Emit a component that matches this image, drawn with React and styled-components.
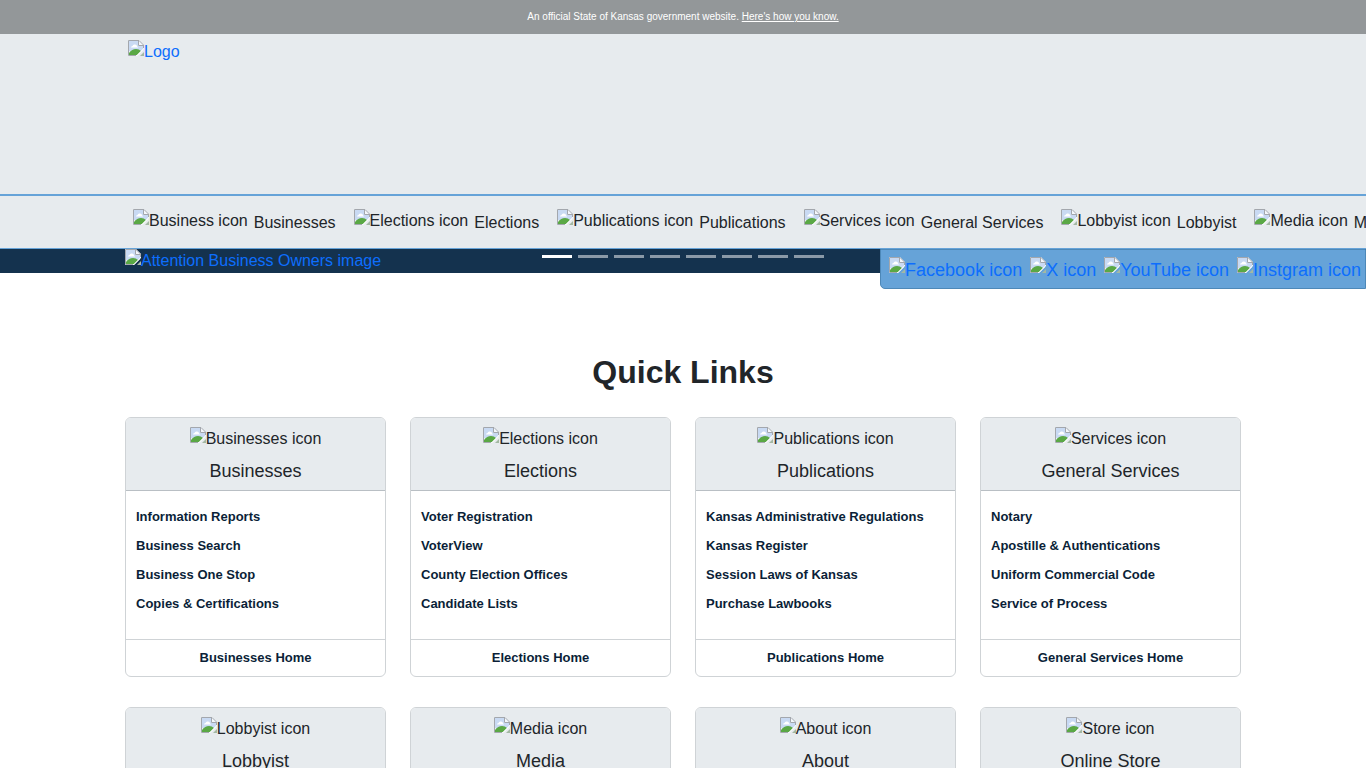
import React from 'react';
import styled, { createGlobalStyle } from 'styled-components';

const GlobalStyle = createGlobalStyle`
  *, *::before, *::after {
    box-sizing: border-box;
  }

  body {
    margin: 0;
    overflow-x: hidden;
    color: #212529;
    background: #fff;
    font-family: 'Liberation Sans', Arial, sans-serif;
    font-size: 16px;
    line-height: 24px;
  }
`;

const Container = styled.div`
  width: 100%;
  max-width: 1140px;
  margin: 0 auto;
  padding: 0 12px;
`;

const Banner = styled.div`
  padding: 7px 12px;
  color: #fff;
  background: #939799;
  font-size: 10px;
  line-height: 20px;
  text-align: center;

  a {
    color: #fff;
  }
`;

const Header = styled.header`
  min-height: 160px;
  padding: 5px 0;
  background: #e7ebee;
`;

const LogoLink = styled.a`
  display: inline-flex;
  margin-left: 3px;
  color: #0d6efd;
  text-decoration: none;
`;

const Placeholder = styled.span`
  display: inline-flex;
  align-items: flex-start;
  white-space: nowrap;

  svg {
    flex: none;
  }
`;

const Nav = styled.nav`
  overflow: hidden;
  border-top: 2px solid #66a3d8;
  border-bottom: 1px solid #66a3d8;
  background: #e7ebee;
`;

const NavList = styled.ul`
  display: flex;
  gap: 18px;
  margin: 0;
  padding: 15px 8px 13px;
  list-style: none;
`;

const NavLink = styled.a`
  display: flex;
  align-items: center;
  gap: 6px;
  height: 24px;
  color: #212529;
  text-decoration: none;
  white-space: nowrap;

  ${Placeholder} {
    padding-bottom: 4px;
  }
`;

const Carousel = styled.section`
  position: relative;
  background: #14324e;
`;

const Slide = styled.a`
  display: flex;
  color: #0d6efd;
  text-decoration: none;
`;

const Indicators = styled.div`
  position: absolute;
  top: 6px;
  left: 0;
  right: 0;
  display: flex;
  justify-content: center;
  gap: 6px;
  pointer-events: none;
`;

const Indicator = styled.button`
  width: 30px;
  height: 3px;
  padding: 0;
  border: 0;
  background: #fff;
  opacity: ${(props) => (props.$active ? 1 : 0.5)};
  pointer-events: auto;
`;

const Social = styled.div`
  position: absolute;
  top: 0;
  right: 0;
  display: flex;
  gap: 8px;
  padding: 7px 4px 5px 8px;
  border: 1px solid #4d88b8;
  border-bottom-left-radius: 5px;
  background: #66a3d8;
  font-size: 18px;
  line-height: 26px;

  a {
    display: flex;
    color: #0d6efd;
    text-decoration: none;
  }
`;

const Title = styled.h1`
  margin: 80px 0 26px;
  font-size: 32px;
  line-height: 38px;
  text-align: center;
`;

const Grid = styled.div`
  display: grid;
  grid-template-columns: repeat(4, 1fr);
  gap: 30px 24px;
  padding-bottom: 30px;

  @media (max-width: 900px) {
    grid-template-columns: repeat(2, 1fr);
  }
`;

const Card = styled.article`
  display: flex;
  flex-direction: column;
  overflow: hidden;
  border: 1px solid #cfd3d6;
  border-radius: 6px;
`;

const CardHeader = styled.div`
  display: flex;
  flex-direction: column;
  align-items: center;
  gap: 8px;
  padding: 9px 8px 7px;
  border-bottom: 1px solid #b9bfc4;
  background: #e7ebee;
`;

const CardTitle = styled.h2`
  margin: 0;
  font-size: 18px;
  font-weight: 400;
  line-height: 24px;
`;

const CardLinks = styled.ul`
  flex: 1;
  margin: 0;
  padding: 11px 10px 21px;
  list-style: none;
  line-height: 29px;
`;

const CardLink = styled.a`
  display: block;
  color: #0b1f38;
  font-size: 13px;
  font-weight: 700;
  text-decoration: none;
`;

const CardFooter = styled.div`
  padding: 6px 10px;
  border-top: 1px solid #cfd3d6;
  text-align: center;
`;

const BrokenImage = ({ alt }) => (
  <Placeholder>
    <svg width="16" height="16" viewBox="0 0 16 16" aria-hidden="true">
      <path d="M0 0H11L16 5V9L9 16H0Z" fill="#f4f7fb" />
      <path d="M1 1H10V6H15V9L13 11H1Z" fill="#c9daf3" />
      <path d="M3 7.5Q3 6 4.5 6Q5 4 7 4.5Q9 4.5 9 6.5Q10 6.5 10 7.5Z" fill="#fff" />
      <path d="M1 15V13Q4 9 8 9Q11 9 13 11L9 15Z" fill="#5aa845" />
      <path d="M13 11L15 9V10L9.500 15.500H8.500Z" fill="#fff" />
      <path d="M8 15.500H0.500V0.500H11L15.500 5V8" fill="none" stroke="#a3a7ad" />
      <path d="M10.500 1V5.500H15" fill="none" stroke="#a3a7ad" />
      <path d="M16 12V16H12Z" fill="#a3b8a3" />
    </svg>
    {alt}
  </Placeholder>
);

const navItems = [
  { alt: 'Business icon', label: 'Businesses' },
  { alt: 'Elections icon', label: 'Elections' },
  { alt: 'Publications icon', label: 'Publications' },
  { alt: 'Services icon', label: 'General Services' },
  { alt: 'Lobbyist icon', label: 'Lobbyist' },
  { alt: 'Media icon', label: 'Media' },
];

const slides = [1, 2, 3, 4, 5, 6, 7, 8];

const socials = ['Facebook icon', 'X icon', 'YouTube icon', 'Instgram icon'];

const cards = [
  {
    alt: 'Businesses icon',
    title: 'Businesses',
    links: ['Information Reports', 'Business Search', 'Business One Stop', 'Copies & Certifications'],
  },
  {
    alt: 'Elections icon',
    title: 'Elections',
    links: ['Voter Registration', 'VoterView', 'County Election Offices', 'Candidate Lists'],
  },
  {
    alt: 'Publications icon',
    title: 'Publications',
    links: ['Kansas Administrative Regulations', 'Kansas Register', 'Session Laws of Kansas', 'Purchase Lawbooks'],
  },
  {
    alt: 'Services icon',
    title: 'General Services',
    links: ['Notary', 'Apostille & Authentications', 'Uniform Commercial Code', 'Service of Process'],
  },
  { alt: 'Lobbyist icon', title: 'Lobbyist', links: [] },
  { alt: 'Media icon', title: 'Media', links: [] },
  { alt: 'About icon', title: 'About', links: [] },
  { alt: 'Store icon', title: 'Online Store', links: [] },
];

const App = () => {
  return (
    <>
      <GlobalStyle />
      <Banner>
        An official State of Kansas government website. <a href="#know">Here's how you know.</a>
      </Banner>
      <Header>
        <Container>
          <LogoLink href="#home">
            <BrokenImage alt="Logo" />
          </LogoLink>
        </Container>
      </Header>
      <Nav>
        <Container>
          <NavList>
            {navItems.map((item) => (
              <li key={item.label}>
                <NavLink href="#nav">
                  <BrokenImage alt={item.alt} />
                  {item.label}
                </NavLink>
              </li>
            ))}
          </NavList>
        </Container>
      </Nav>
      <Carousel>
        <Container>
          <Slide href="#owners">
            <BrokenImage alt="Attention Business Owners image" />
          </Slide>
        </Container>
        <Indicators>
          {slides.map((n) => (
            <Indicator key={n} type="button" $active={n === 1} aria-label={`Slide ${n}`} />
          ))}
        </Indicators>
        <Social>
          {socials.map((alt) => (
            <a key={alt} href="#social">
              <BrokenImage alt={alt} />
            </a>
          ))}
        </Social>
      </Carousel>
      <Container as="main">
        <Title>Quick Links</Title>
        <Grid>
          {cards.map((card) => (
            <Card key={card.title}>
              <CardHeader>
                <BrokenImage alt={card.alt} />
                <CardTitle>{card.title}</CardTitle>
              </CardHeader>
              <CardLinks>
                {card.links.map((link) => (
                  <li key={link}>
                    <CardLink href="#link">{link}</CardLink>
                  </li>
                ))}
              </CardLinks>
              <CardFooter>
                <CardLink href="#more">{card.title} Home</CardLink>
              </CardFooter>
            </Card>
          ))}
        </Grid>
      </Container>
    </>
  );
};

export default App;
